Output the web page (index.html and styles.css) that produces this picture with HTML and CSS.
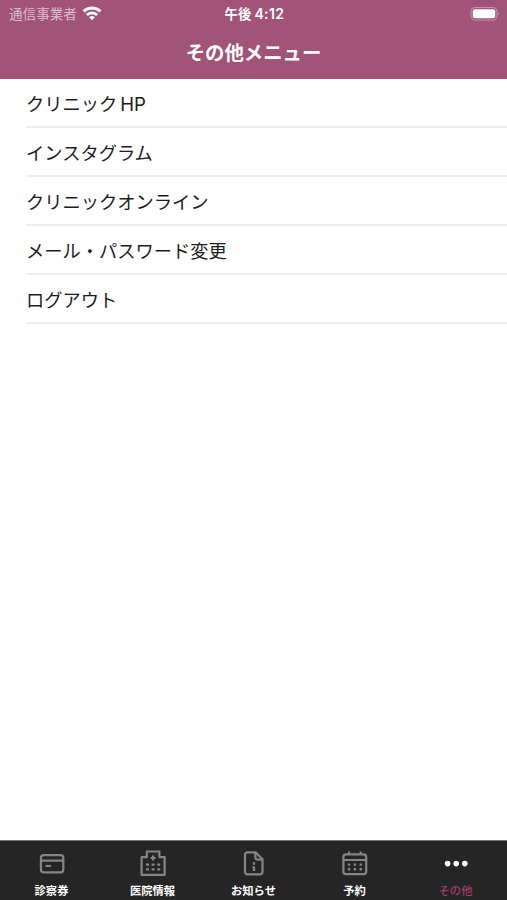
FILE: index.html
```html
<!DOCTYPE html>
<html lang="ja">
<head>
  <meta charset="UTF-8" />
  <meta name="viewport" content="width=device-width, initial-scale=1.0"/>
  <title>その他メニュー</title>
  <link rel="stylesheet" href="styles.css">
</head>
<body>

  <header class="header">
    <div class="status-bar">
      <div class="carrier">
        <span>通信事業者</span>
        <svg class="wifi" width="20" height="15" viewBox="0 0 20 15" fill="none" stroke="#fff" stroke-width="2.9">
          <path d="M1.5 5.4a12.2 12.2 0 0 1 17 0"/>
          <path d="M4.8 9a7.5 7.5 0 0 1 10.4 0"/>
          <path d="M10 14.2l-2.9-2.9a4.2 4.2 0 0 1 5.8 0z" fill="#fff" stroke="none"/>
        </svg>
      </div>
      <div class="time">午後<span class="clock">4:12</span></div>
      <div class="battery">
        <svg width="30" height="14" viewBox="0 0 30 14">
          <rect x="1" y="0.5" width="26" height="12.6" rx="3.8" fill="none" stroke="#c593ae"/>
          <rect x="2.8" y="2.3" width="22.4" height="9" rx="2" fill="#fff"/>
          <path d="M28.3 4.8q1.6 2 0 4z" fill="#c593ae"/>
        </svg>
      </div>
    </div>
    <h1>その他メニュー</h1>
  </header>

  <ul class="menu">
    <li>クリニック<span class="latin">HP</span></li>
    <li>インスタグラム</li>
    <li>クリニックオンライン</li>
    <li>メール・パスワード変更</li>
    <li>ログアウト</li>
  </ul>

  <nav class="tab-bar">
    <a class="tab">
      <svg width="28" height="28" viewBox="0 0 28 28">
        <rect x="2.9" y="5.2" width="22.4" height="17.2" rx="2.8"/>
        <path d="M3 10.6h22M7.5 16h5.5"/>
      </svg>
      <span>診察券</span>
    </a>
    <a class="tab">
      <svg width="28" height="28" viewBox="0 0 28 28">
        <path d="M2.6 24.9V7.2h5.2V1.5h12.6v5.7h5.2v17.7z" stroke-linejoin="round"/>
        <path d="M14.1 5.4v5.2M11.5 8h5.2"/>
        <path class="dots" d="M7 14.6h3M12.6 14.6h3M18.2 14.6h3M7 19.4h3M12.6 19.4h3M18.2 19.4h3"/>
      </svg>
      <span>医院情報</span>
    </a>
    <a class="tab">
      <svg width="28" height="28" viewBox="0 0 28 28">
        <path d="M7.3 2.3h8.4l6.8 6.8v12.9a2.3 2.3 0 0 1-2.3 2.3H7.3A2.3 2.3 0 0 1 5 22V4.6a2.3 2.3 0 0 1 2.3-2.3z"/>
        <path d="M15.4 2.6v4.7a2.3 2.3 0 0 0 2.3 2.3h4.7"/>
        <path d="M14 12.2v2.6M14 16.4v4.6M12.6 17.2H14"/>
      </svg>
      <span>お知らせ</span>
    </a>
    <a class="tab">
      <svg width="28" height="28" viewBox="0 0 28 28">
        <rect x="2.4" y="4.4" width="22.8" height="19.8" rx="2.6"/>
        <path d="M2.6 10h22.6M8.1 1.6v3M19.7 1.6v3"/>
        <path class="dots" d="M6.8 14.6h2.4M12.7 14.6h2.4M18.6 14.6h2.4M6.8 19.2h2.4M12.7 19.2h2.4M18.6 19.2h2.4"/>
      </svg>
      <span>予約</span>
    </a>
    <a class="tab active">
      <svg width="28" height="28" viewBox="0 0 28 28">
        <circle cx="5.6" cy="13.6" r="2.8"/>
        <circle cx="14.2" cy="13.6" r="2.8"/>
        <circle cx="22.8" cy="13.6" r="2.8"/>
      </svg>
      <span>その他</span>
    </a>
  </nav>

</body>
</html>
```

FILE: styles.css
```css
* {
  box-sizing: border-box;
}
body {
  margin: 0;
  height: 100vh;
  display: flex;
  flex-direction: column;
  font-family: "Noto Sans CJK JP", sans-serif;
  background: #fff;
  color: #1c1c1c;
  overflow: hidden;
}
.header {
  height: 79px;
  background: #a15378;
  color: #fff;
}
.status-bar {
  display: grid;
  grid-template-columns: 1fr auto 1fr;
  align-items: center;
  height: 27px;
  padding: 0 7px 0 9px;
}
.carrier {
  display: flex;
  align-items: center;
  gap: 5px;
  font-size: 13.6px;
  line-height: 27px;
  color: #dcbccc;
}
.wifi {
  margin-top: -1px;
}
.time {
  font-size: 13.4px;
  line-height: 27px;
  font-weight: 700;
}
.clock {
  margin-left: 3px;
  font-family: Inter, sans-serif;
  font-size: 14px;
  font-weight: 600;
  letter-spacing: 0.4px;
}
.battery {
  display: flex;
  justify-content: flex-end;
}
h1 {
  margin: 0;
  text-align: center;
  font-size: 19.4px;
  line-height: 50px;
  font-weight: 700;
}
.menu {
  flex: 1;
  margin: 0;
  padding: 0 0 0 26px;
  list-style: none;
}
.menu li {
  height: 49px;
  border-bottom: 2px solid #eeeeee;
  font-size: 18.25px;
  line-height: 49px;
}
.latin {
  margin-left: 3px;
  font-family: Inter, sans-serif;
  font-size: 18.6px;
}
.tab-bar {
  display: flex;
  height: 60px;
  padding: 0 1px;
  background: #252525;
  border-top: 1px solid #747474;
}
.tab {
  flex: 1;
  display: flex;
  flex-direction: column;
  align-items: center;
  padding-top: 9px;
  font-size: 11.3px;
  line-height: 16px;
  font-weight: 700;
  color: #fff;
}
.tab svg {
  fill: none;
  stroke: #858585;
  stroke-width: 2.2;
  margin-bottom: 4px;
}
.tab .dots {
  stroke-width: 2.4;
}
.tab.active {
  color: #9c3e68;
  font-weight: 500;
}
.tab.active svg {
  fill: #fff;
  stroke: none;
}
```
